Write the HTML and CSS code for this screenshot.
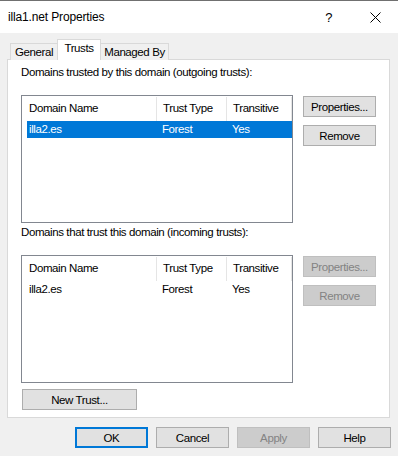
FILE: index.html
```html
<!DOCTYPE html>
<html>
<head>
    <meta charset="utf-8" />
    <title>illa1.net Properties</title>
    <link rel="stylesheet" href="styles.css">
</head>
<body>
    <div class="dialog">
        <div class="titlebar">
            <span class="title">illa1.net Properties</span>
            <span class="help-q">?</span>
            <svg class="close" width="11" height="11" viewBox="0 0 11 11">
                <path d="M0.5 0.5 L10.5 10.5 M10.5 0.5 L0.5 10.5" stroke="#000" stroke-width="1" fill="none" />
            </svg>
        </div>

        <div class="tabs">
            <div class="tab t-general">General</div>
            <div class="tab t-trusts selected">Trusts</div>
            <div class="tab t-managed">Managed By</div>
        </div>

        <div class="panel">
            <div class="label">Domains trusted by this domain (outgoing trusts):</div>
            <div class="section">
                <div class="list">
                    <div class="list-head">
                        <div class="hcell c1">Domain Name</div>
                        <div class="hcell c2">Trust Type</div>
                        <div class="hcell c3">Transitive</div>
                    </div>
                    <div class="row active">
                        <div class="cell c1">illa2.es</div>
                        <div class="cell c2">Forest</div>
                        <div class="cell c3">Yes</div>
                    </div>
                </div>
                <div class="side">
                    <button class="btn">Properties...</button>
                    <button class="btn">Remove</button>
                </div>
            </div>

            <div class="label second">Domains that trust this domain (incoming trusts):</div>
            <div class="section">
                <div class="list">
                    <div class="list-head">
                        <div class="hcell c1">Domain Name</div>
                        <div class="hcell c2">Trust Type</div>
                        <div class="hcell c3">Transitive</div>
                    </div>
                    <div class="row">
                        <div class="cell c1">illa2.es</div>
                        <div class="cell c2">Forest</div>
                        <div class="cell c3">Yes</div>
                    </div>
                </div>
                <div class="side">
                    <button class="btn" disabled>Properties...</button>
                    <button class="btn" disabled>Remove</button>
                </div>
            </div>

            <button class="btn new-trust">New Trust...</button>
        </div>

        <div class="footer">
            <button class="btn default">OK</button>
            <button class="btn">Cancel</button>
            <button class="btn" disabled>Apply</button>
            <button class="btn">Help</button>
        </div>
    </div>
</body>
</html>
```

FILE: styles.css
```css
* {
    box-sizing: border-box;
}

html, body {
    margin: 0px;
    padding: 0px;
}

body {
    background-color: #f0f0f0;
    font-family: 'Liberation Sans', Arial, sans-serif;
    font-size: 11.5px;
    letter-spacing: -0.4px;
    color: #000;
    width: 398px;
    height: 456px;
    overflow: hidden;
}

.titlebar {
    height: 33px;
    background-color: #fff;
    border-top: 1px solid #707070;
    display: flex;
    align-items: center;
    padding-left: 8px;
}

.title {
    font-size: 12px;
    letter-spacing: -0.15px;
    flex: 1;
    padding-bottom: 1px;
}

.help-q {
    font-size: 13px;
    margin-right: 38px;
}

.close {
    margin-right: 17px;
}

.tabs {
    display: flex;
    align-items: flex-end;
    height: 27px;
    padding-left: 10px;
    position: relative;
    z-index: 1;
    margin-bottom: -1px;
}

.tab {
    height: 17px;
    border: 1px solid #d9d9d9;
    border-bottom: none;
    background-color: #f0f0f0;
    padding-top: 1px;
    line-height: 15px;
    text-align: center;
}

.t-general {
    width: 47px;
    border-right: none;
}

.t-trusts {
    width: 44px;
}

.t-managed {
    width: 68px;
    border-left: none;
}

.tab.selected {
    height: 21px;
    background-color: #fff;
    line-height: 14px;
}

.panel {
    margin: 0px 8px 0px 7px;
    height: 359px;
    background-color: #fff;
    border: 1px solid #d9d9d9;
    padding: 5px 13px 0px 13px;
}

.label {
    height: 15px;
    line-height: 15px;
}

.label.second {
    margin-top: 2px;
}

.section {
    display: flex;
    margin-top: 15px;
}

.list {
    width: 273px;
    height: 128px;
    border: 1px solid #828790;
    background-color: #fff;
}

.list-head {
    display: grid;
    grid-template-columns: 135px 70px 1fr;
    height: 25px;
    padding-top: 1px;
}

.hcell {
    border-right: 1px solid #e5e5e5;
    padding-left: 6px;
    line-height: 23px;
}

.hcell.c1 {
    padding-left: 7px;
}

.row {
    display: grid;
    grid-template-columns: 129px 70px 1fr;
    margin-left: 5px;
    height: 17px;
    line-height: 17px;
}

.row .cell {
    padding-left: 6px;
}

.row .cell.c1 {
    padding-left: 2px;
}

.row.active {
    background-color: #0078d7;
    color: #fff;
}

.side {
    display: flex;
    flex-direction: column;
    gap: 8px;
    margin-left: 10px;
    padding-top: 1px;
}

.btn {
    font-family: 'Liberation Sans', Arial, sans-serif;
    font-size: 11.5px;
    letter-spacing: -0.4px;
    color: #000;
    background-color: #e1e1e1;
    border: 1px solid #adadad;
    width: 73px;
    height: 21px;
    padding: 0px;
    margin: 0px;
}

.btn:disabled {
    background-color: #cccccc;
    border-color: #bfbfbf;
    color: #838383;
}

.new-trust {
    width: 115px;
    margin-top: 6px;
    margin-left: 1px;
}

.footer {
    display: flex;
    justify-content: flex-end;
    gap: 8px;
    padding: 9px 7px 0px 0px;
}

.btn.default {
    border: 2px solid #0078d7;
}
```
